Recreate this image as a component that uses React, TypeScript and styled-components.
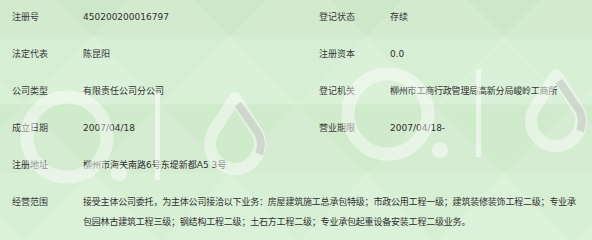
import React from "react";
import styled, { createGlobalStyle } from "styled-components";

const GlobalStyle = createGlobalStyle`
  html, body { margin: 0; padding: 0; background: #d5edd1; }
  * { box-sizing: border-box; }
`;

const Page = styled.div`
  position: relative;
  width: 592px;
  height: 240px;
  overflow: hidden;
  font-family: "DejaVu Sans", "Noto Sans CJK SC", sans-serif;
  font-size: 9px;
  line-height: 20px;
  color: #333;
`;

const Backdrop = styled.svg`
  position: absolute;
  inset: 0;
  z-index: 0;
`;

const Watermark = styled.svg`
  position: absolute;
  inset: 0;
  z-index: 2;
  pointer-events: none;
`;

const Table = styled.div`
  position: relative;
  z-index: 1;
  display: flex;
  flex-direction: column;
`;

const Row = styled.div<{ $tall?: boolean }>`
  display: grid;
  grid-template-columns: 71px 236px 71px 1fr;
  align-items: start;
  padding: 7px 0 0 12px;
  height: ${(p) => (p.$tall ? "auto" : "37px")};
`;

const Label = styled.div`
  color: #3a3a3a;
  white-space: nowrap;
`;

const Value = styled.div<{ $wide?: boolean; $cjk?: boolean }>`
  color: #303030;
  white-space: ${(p) => (p.$wide ? "normal" : "nowrap")};
  grid-column: ${(p) => (p.$wide ? "2 / 5" : "auto")};
  width: ${(p) => (p.$wide ? "498px" : "auto")};
  letter-spacing: ${(p) => (p.$cjk ? "-0.2px" : "0")};
`;

const levels = [-32.5, 36, 104.5, 173, 241.5];
const bandFill = ["#cde8c8", "#d6eed3", "#d0eacc", "#d7efd4"];

function BackdropArt() {
  const tris: React.ReactNode[] = [];
  for (let j = 0; j < levels.length - 1; j++) {
    const top = levels[j];
    const bot = levels[j + 1];
    const start = j % 2 === 0 ? 24.5 : 93;
    for (let k = -1; k < 6; k++) {
      const xa = start + 137 * k;
      tris.push(
        <polygon
          key={`${j}-${k}`}
          points={`${xa},${top} ${xa - 68.5},${bot} ${xa + 68.5},${bot}`}
          fill="#ffffff"
          opacity={0.12}
        />
      );
    }
  }
  return (
    <Backdrop width="592" height="240" viewBox="0 0 592 240">
      {levels.slice(0, -1).map((y, i) => (
        <rect key={i} x="0" y={Math.max(0, y)} width="592" height={levels[i + 1] - Math.max(0, y)} fill={bandFill[i]} />
      ))}
      {tris}
    </Backdrop>
  );
}

function LogoMark({ dx, dy }: { dx: number; dy: number }) {
  const cx = 235;
  const cy = 144;
  return (
    <g transform={`translate(${dx} ${dy})`}>
      <circle cx="67" cy="137" r="40" fill="none" stroke="#ffffff" strokeOpacity="0.45" strokeWidth="13" />
      <circle cx="119" cy="173" r="8" fill="#ffffff" fillOpacity="0.45" />
      <rect x="155" y="92" width="5" height="88" fill="#ffffff" fillOpacity="0.5" />
      <path
        d={`M${cx},${cy - 46} L${cx + 21},${cy - 13.6} A25 25 0 1 1 ${cx - 21},${cy - 13.6} Z`}
        fill="none"
        stroke="#ffffff"
        strokeOpacity="0.45"
        strokeWidth="12"
        strokeLinejoin="round"
      />
      <path
        d={`M${cx + 3},${cy - 40} L${cx + 23},${cy - 11} A25 25 0 0 1 ${cx + 24},${cy + 10}`}
        fill="none"
        stroke="#9a9a9a"
        strokeOpacity="0.32"
        strokeWidth="8"
      />
    </g>
  );
}

const rows: [string, string, string, string, boolean][] = [
  ["注册号", "450200200016797", "登记状态", "存续", false],
  ["法定代表", "陈昆阳", "注册资本", "0.0", false],
  ["公司类型", "有限责任公司分公司", "登记机关", "柳州市工商行政管理局高新分局峻岭工商所", true],
  ["成立日期", "2007/04/18", "营业期限", "2007/04/18-", false],
];

export default function App() {
  return (
    <>
      <GlobalStyle />
      <Page>
        <BackdropArt />
        <Table>
          {rows.map((r) => (
            <Row key={r[0]}>
              <Label>{r[0]}</Label>
              <Value>{r[1]}</Value>
              <Label>{r[2]}</Label>
              <Value $cjk={r[4]}>{r[3]}</Value>
            </Row>
          ))}
          <Row>
            <Label>注册地址</Label>
            <Value $wide>柳州市海关南路6号东堤新都A5 3号</Value>
          </Row>
          <Row $tall>
            <Label>经营范围</Label>
            <Value $wide $cjk>
              接受主体公司委托，为主体公司接洽以下业务：房屋建筑施工总承包特级；市政公用工程一级；建筑装修装饰工程二级；专业承包园林古建筑工程三级；钢结构工程二级；土石方工程二级；专业承包起重设备安装工程二级业务。
            </Value>
          </Row>
        </Table>
        <Watermark width="592" height="240" viewBox="0 0 592 240">
          <LogoMark dx={0} dy={0} />
          <LogoMark dx={321} dy={-23} />
        </Watermark>
      </Page>
    </>
  );
}
